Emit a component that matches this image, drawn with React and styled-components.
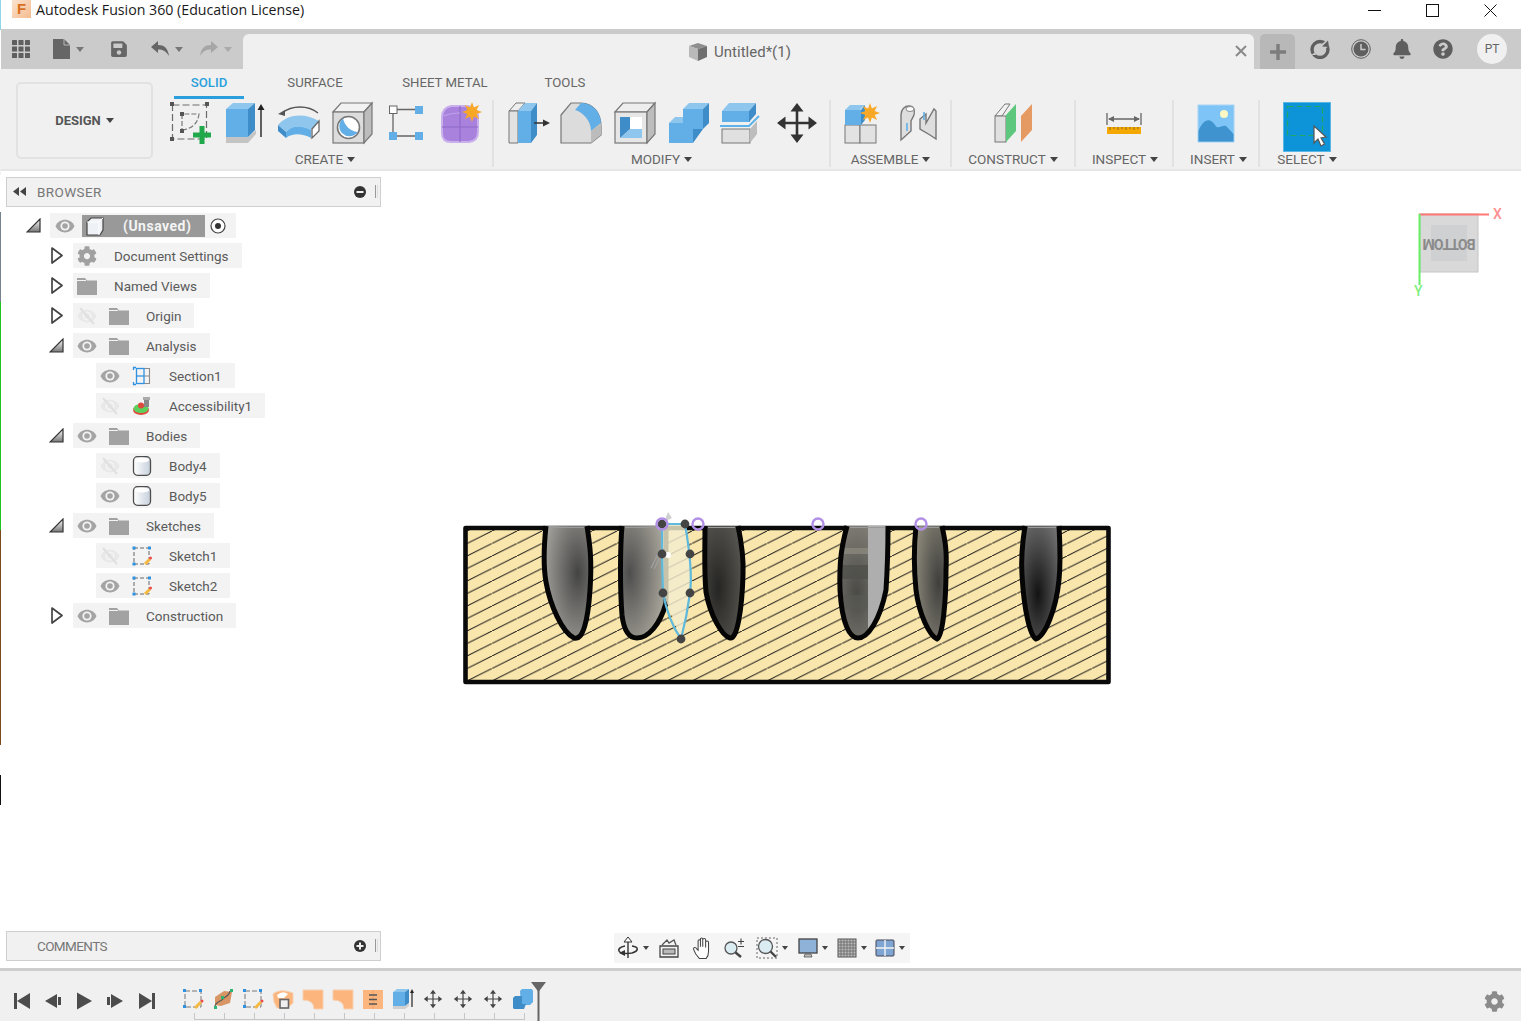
import React from 'react';
import styled, { createGlobalStyle } from 'styled-components';
import { FaCog, FaBell, FaQuestionCircle, FaSave } from 'react-icons/fa';

const GlobalStyle = createGlobalStyle`
  html, body { margin: 0; padding: 0; background: #fff; }
  body { font-family: Roboto, "Liberation Sans", sans-serif; overflow: hidden; }
`;

const BLUE = '#62aee6';
const DARK_BLUE = '#3f8dc8';
const LIGHT_BLUE = '#8fc6ee';
const LINE = '#6b6b6b';
const PEACH = '#fdb57e';

const Frame = styled.div`
  position: relative;
  width: 1521px;
  height: 1021px;
  display: flex;
  flex-direction: column;
  background: #fff;
`;

const EdgeStrip = styled.div`
  position: absolute;
  left: 0;
  top: 0;
  width: 1px;
  height: 810px;
  z-index: 5;
  background: linear-gradient(to bottom,
    #8fd6e8 0 30px, #fff 30px 69px, #f0f0f0 69px 175px, #fff 175px 212px, #77838a 212px 302px,
    #1fc41f 302px 530px, #7a4a1a 530px 745px, #fff 745px 775px, #111 775px 805px, #fff 805px);
`;

const TitleBar = styled.div`
  height: 29px;
  display: flex;
  align-items: flex-start;
  padding-left: 12px;
  flex-shrink: 0;
`;

const AppLogo = styled.div`
  width: 19px;
  height: 18px;
  background: linear-gradient(135deg, #fbe3cf, #f4bb8e);
  color: #d9701f;
  font: bold 15px/18px "Liberation Sans", sans-serif;
  text-align: center;
`;

const TitleText = styled.div`
  margin-left: 5px;
  font: 14.2px/20px "Open Sans", sans-serif;
  color: #1a1a1a;
`;

const WindowButtons = styled.div`
  margin-left: auto;
  margin-right: 2px;
  display: flex;
`;

const WindowButton = styled.div`
  width: 58px;
  height: 20px;
  display: flex;
  align-items: center;
  justify-content: center;
`;

const TopBar = styled.div`
  height: 40px;
  flex-shrink: 0;
  background: #cbcbcb;
  display: flex;
  align-items: flex-end;
`;

const FileTools = styled.div`
  width: 243px;
  height: 40px;
  display: flex;
  align-items: center;
  padding-left: 12px;
  box-sizing: border-box;
`;

const FileTool = styled.div`
  display: flex;
  align-items: center;
  gap: 6px;
  margin-left: ${({ $ml }) => $ml || 0}px;
  color: ${({ $faded }) => ($faded ? '#a6a6a6' : '#666')};
  svg { display: block; }
`;

const Caret = styled.span`
  display: inline-block;
  width: 0;
  height: 0;
  border-left: ${({ $s }) => $s || 3}px solid transparent;
  border-right: ${({ $s }) => $s || 3}px solid transparent;
  border-top: ${({ $s }) => ($s ? $s + 1 : 4)}px solid ${({ $c }) => $c || '#444'};
`;

const DocTab = styled.div`
  width: 1011px;
  height: 35px;
  background: #f0f0f0;
  border-radius: 6px 6px 0 0;
  position: relative;
  display: flex;
  align-items: center;
  justify-content: center;
  gap: 6px;
  padding-right: 18px;
  box-sizing: border-box;
  font-size: 15px;
  color: #666;
`;

const TabClose = styled.div`
  position: absolute;
  right: 7px;
  top: 11px;
  line-height: 0;
`;

const PlusTab = styled.div`
  width: 35px;
  height: 35px;
  margin-left: 6px;
  background: #b8b8b8;
  border-radius: 5px 5px 0 0;
  display: flex;
  align-items: center;
  justify-content: center;
`;

const StatusIcons = styled.div`
  height: 40px;
  margin-left: 15px;
  display: flex;
  align-items: center;
  gap: 21px;
  color: #5f5f5f;
  svg { display: block; }
`;

const Avatar = styled.div`
  width: 30px;
  height: 30px;
  margin-left: 3px;
  border-radius: 50%;
  background: #f0f0f0;
  color: #666;
  font-size: 12px;
  line-height: 30px;
  text-align: center;
`;

const Ribbon = styled.div`
  height: 102px;
  flex-shrink: 0;
  background: #f0f0f0;
  border-bottom: 2px solid #e6e6e6;
  box-sizing: border-box;
  display: flex;
`;

const DesignButton = styled.div`
  width: 137px;
  height: 77px;
  margin: 13px 5px 0 16px;
  box-sizing: border-box;
  border: 2px solid #e2e2e2;
  border-radius: 5px;
  display: flex;
  align-items: center;
  justify-content: center;
  gap: 5px;
  font-size: 13px;
  font-weight: 700;
  color: #555;
`;

const RibbonBody = styled.div`
  display: flex;
  flex-direction: column;
`;

const Tabs = styled.div`
  height: 31px;
  display: flex;
  padding-left: 16px;
`;

const TabItem = styled.div`
  width: ${({ $w }) => $w}px;
  height: 30px;
  box-sizing: border-box;
  padding-top: 6px;
  text-align: center;
  font-size: 13.2px;
  line-height: 16px;
  color: ${({ $active }) => ($active ? '#2a9fdc' : '#666')};
  font-weight: ${({ $active }) => ($active ? 500 : 400)};
  border-bottom: 3px solid ${({ $active }) => ($active ? '#2a9fdc' : 'transparent')};
`;

const Groups = styled.div`
  display: flex;
  height: 67px;
`;

const Group = styled.div`
  width: ${({ $w }) => $w}px;
  box-sizing: border-box;
  border-right: ${({ $last }) => ($last ? 'none' : '2px solid #e2e2e2')};
  display: flex;
  flex-direction: column;
  align-items: center;
`;

const ToolRow = styled.div`
  height: 50px;
  margin-top: 1px;
  flex-shrink: 0;
  display: flex;
`;

const Tool = styled.div`
  width: ${({ $w }) => $w || 54}px;
  height: 44px;
  display: flex;
  align-items: center;
  justify-content: center;
  svg { display: block; }
`;

const SelectTool = styled.div`
  width: 48px;
  height: 50px;
  margin-top: 1px;
  background: #0d94d8;
  border: 1px solid #5ab6e6;
  box-sizing: border-box;
  svg { display: block; }
`;

const GroupLabel = styled.div`
  display: flex;
  align-items: center;
  gap: 4px;
  font-size: 13.5px;
  line-height: 16px;
  color: #666;
  padding-left: ${({ $pl }) => $pl || 0}px;
`;

const Main = styled.div`
  flex: 1;
  display: flex;
  min-height: 0;
`;

const SideColumn = styled.div`
  width: 375px;
  margin-left: 6px;
  padding: 6px 0 7px;
  display: flex;
  flex-direction: column;
`;

const PanelHeader = styled.div`
  height: 30px;
  flex-shrink: 0;
  box-sizing: border-box;
  background: #f1f1f1;
  border: 1px solid #cfcfcf;
  display: flex;
  align-items: center;
  padding: 0 2px 1px 6px;
  font-size: 13.5px;
  color: #777;
  margin-top: ${({ $bottom }) => ($bottom ? 'auto' : 0)};
`;

const PanelTitle = styled.span`
  margin-left: ${({ $ml }) => $ml}px;
  letter-spacing: ${({ $ls }) => $ls}px;
`;

const PanelTools = styled.div`
  margin-left: auto;
  display: flex;
  align-items: center;
  gap: 9px;
  svg { display: block; }
`;

const Grip = styled.span`
  width: 1px;
  height: 13px;
  border-left: 1px solid #999;
  border-right: 1px solid #ddd;
`;

const Tree = styled.div`
  margin-top: 6px;
  padding-left: 20px;
  display: flex;
  flex-direction: column;
  gap: 5px;
`;

const TreeRow = styled.div`
  display: flex;
  align-items: center;
  height: 25px;
  margin-left: ${({ $level }) => $level * 23}px;
`;

const Toggle = styled.div`
  width: 24px;
  flex-shrink: 0;
  svg { display: block; }
`;

const RowBox = styled.div`
  height: 25px;
  display: flex;
  align-items: center;
  background: #f3f3f3;
  padding: 0 13px 0 4px;
  font-size: 13.5px;
  color: #5a5a5a;
  svg { display: block; }
`;

const RootBox = styled(RowBox)`
  padding: 0 9px 0 5px;
`;

const Slot = styled.div`
  width: 20px;
  height: 20px;
  flex-shrink: 0;
  display: flex;
  align-items: center;
  justify-content: center;
  margin-right: ${({ $mr }) => $mr}px;
  color: #a0a0a0;
`;

const RootLabel = styled.div`
  width: 123px;
  height: 22px;
  margin-left: 7px;
  margin-right: 4px;
  background: #999;
  color: #f4f4f4;
  font-size: 14px;
  font-weight: 700;
  letter-spacing: 0.5px;
  display: flex;
  align-items: center;
  padding-left: 3px;
  box-sizing: border-box;
  gap: 18px;
`;

const Viewport = styled.div`
  flex: 1;
  position: relative;
`;

const Drawing = styled.svg`
  position: absolute;
  left: 74px;
  top: 334px;
`;

const ViewCube = styled.svg`
  position: absolute;
  left: 1029px;
  top: 34px;
`;

const NavBar = styled.div`
  position: absolute;
  left: 233px;
  top: 762px;
  width: 296px;
  height: 30px;
  background: #f5f5f5;
  display: flex;
  align-items: center;
`;

const NavItem = styled.div`
  display: flex;
  align-items: center;
  gap: 4px;
  margin-left: ${({ $ml }) => $ml}px;
  svg { display: block; }
`;

const Timeline = styled.div`
  height: 53px;
  flex-shrink: 0;
  box-sizing: border-box;
  border-top: 3px solid #cdcdcd;
  background: #f0f0f0;
  display: flex;
  align-items: flex-start;
`;

const Playback = styled.div`
  display: flex;
  gap: 13px;
  margin: 21px 0 0 13px;
  svg { display: block; }
`;

const Track = styled.div`
  position: relative;
  height: 50px;
  margin-left: 27px;
  display: flex;
  align-items: flex-start;
  gap: 8px;
  padding-top: 17px;
  box-sizing: border-box;
  svg { display: block; }
`;

const Ruler = styled.div`
  position: absolute;
  left: 12px;
  top: 42px;
  width: 331px;
  height: 7px;
  box-sizing: border-box;
  border-bottom: 1px solid #c6c6c6;
  background: repeating-linear-gradient(to right, #c6c6c6 0 1px, transparent 1px 30px);
`;

const Marker = styled.svg`
  position: absolute;
  left: 349px;
  top: 11px;
`;

const TimelineGear = styled.div`
  margin: 20px 16px 0 auto;
  color: #8b8b8b;
  line-height: 0;
`;

const Cell = ({ children, w = 48, h = 44 }) => (
  <svg width={w} height={h} viewBox={`0 0 ${w} ${h}`}>{children}</svg>
);

const Star = ({ cx, cy, r = 8, fill = '#f9a825' }) => {
  const pts = [];
  for (let i = 0; i < 16; i++) {
    const a = (i * Math.PI) / 8;
    const rr = i % 2 ? r * 0.5 : r;
    pts.push(`${(cx + rr * Math.cos(a)).toFixed(1)},${(cy + rr * Math.sin(a)).toFixed(1)}`);
  }
  return <polygon points={pts.join(' ')} fill={fill} />;
};

const SketchNewIcon = () => (
  <Cell>
    <rect x="6.5" y="4" width="34" height="34" fill="none" stroke={LINE} strokeWidth="1.2" strokeDasharray="7 3" />
    {[[6, 3], [41, 3], [6, 38]].map(([x, y]) => <rect key={x + '' + y} x={x - 2} y={y - 2} width="4" height="4" fill="#555" />)}
    <path d="M16 13V29M16 29C26 28 32 22 33 13H16" fill="none" stroke="#777" strokeWidth="1.2" strokeDasharray="5 2" />
    <rect x="14" y="11" width="4" height="4" fill="#555" />
    <rect x="14" y="28" width="4" height="4" fill="#555" />
    <path d="M33.5 25h5v6.5H45v5h-6.5V43h-5v-6.5H27v-5h6.5z" fill="#21a84a" />
  </Cell>
);

const ExtrudeIcon = () => (
  <Cell>
    <polygon points="6,36 28,36 36,29 36,33 28,42 6,42" fill="#c4c4c4" />
    <polygon points="6,8 13,2 35,2 28,8" fill={LIGHT_BLUE} />
    <rect x="6" y="8" width="22" height="28" fill={BLUE} />
    <polygon points="28,8 35,2 35,29 28,36" fill={DARK_BLUE} />
    <path d="M41 36V6" stroke="#222" strokeWidth="1.4" />
    <path d="M41 3l-3.5 6h7z" fill="#222" />
  </Cell>
);

const RevolveIcon = () => (
  <Cell>
    <path d="M8 12C18 4 34 4 44 12" fill="none" stroke="#555" strokeWidth="1.3" />
    <path d="M4 13l7-4v6z" fill="#555" />
    <path d="M4 24C14 12 32 12 45 20L37 29C28 24 18 24 12 31z" fill={LIGHT_BLUE} />
    <path d="M4 24L12 31V37L4 30z" fill={DARK_BLUE} />
    <path d="M12 31C18 24 28 24 37 29V37C28 32 18 32 12 37z" fill={BLUE} />
    <path d="M38 28L45 20V30L38 37z" fill="#fff" stroke="#666" strokeWidth="1.3" />
  </Cell>
);

const HoleIcon = () => (
  <Cell>
    <polygon points="5,11 13,2 44,2 36,11" fill="#f2f2f2" stroke="#777" strokeWidth="1.2" />
    <rect x="5" y="11" width="31" height="31" fill="#dcdcdc" stroke="#777" strokeWidth="1.2" />
    <polygon points="36,11 44,2 44,33 36,42" fill="#bdbdbd" stroke="#777" strokeWidth="1.2" />
    <circle cx="20.5" cy="26.5" r="11" fill="#fff" stroke="#777" strokeWidth="1.6" />
    <path d="M15 17.5A10 10 0 1 0 29.5 31C22 30 17 25 15 17.5z" fill={BLUE} />
  </Cell>
);

const PatternIcon = () => (
  <Cell>
    <path d="M15 8.5H33M11 12V31M15 35H33" stroke="#666" strokeWidth="1.3" />
    <rect x="7.5" y="5" width="7.5" height="7.5" fill="#fff" stroke="#666" />
    <rect x="33" y="5" width="8" height="8" fill={BLUE} />
    <rect x="7" y="31" width="8" height="8" fill={BLUE} />
    <rect x="33" y="31" width="8" height="8" fill={BLUE} />
  </Cell>
);

const FormIcon = () => (
  <Cell>
    <path d="M6 16Q6 7 15 5H30Q41 5 42 14V31Q42 40 33 41H15Q6 41 6 32z" fill="#a882dd" stroke="#c9b0ec" strokeWidth="2" />
    <path d="M6 26H42M24 5V41" fill="none" stroke="#8e69c8" strokeWidth="1.1" />
    <path d="M8 15Q14 12 24 12" fill="none" stroke="#bfa3e8" strokeWidth="1.2" />
    <Star cx={36} cy={11} r={10} />
  </Cell>
);

const PressPullIcon = () => (
  <Cell>
    <polygon points="6,10 13,2 22,2 15,10" fill="#eee" stroke="#777" />
    <polygon points="6,10 15,10 15,42 6,42" fill="#e2e2e2" stroke="#777" />
    <polygon points="15,10 22,2 34,2 28,10" fill={LIGHT_BLUE} />
    <rect x="15" y="10" width="13" height="32" fill={BLUE} />
    <polygon points="28,10 34,2 34,34 28,42" fill={DARK_BLUE} />
    <path d="M31 22H41" stroke="#333" strokeWidth="1.5" />
    <path d="M47 22l-7-3.5v7z" fill="#333" />
  </Cell>
);

const FilletIcon = () => (
  <Cell>
    <path d="M4 14L14 2H24C36 2 44 12 44 26V34L34 42H4z" fill="#dcdcdc" stroke="#777" strokeWidth="1.2" />
    <path d="M24 2C36 2 44 12 44 22L34 30C34 20 26 11 18 9z" fill={BLUE} />
    <path d="M34 30V42L44 34V22z" fill="#bcbcbc" />
  </Cell>
);

const ShellIcon = () => (
  <Cell>
    <polygon points="4,11 12,2 44,2 36,11" fill="#eee" stroke="#777" strokeWidth="1.2" />
    <rect x="4" y="11" width="32" height="31" fill="#e6e6e6" stroke="#777" strokeWidth="1.2" />
    <polygon points="36,11 44,2 44,33 36,42" fill="#bdbdbd" stroke="#777" strokeWidth="1.2" />
    <rect x="9" y="16" width="22" height="21" fill="#fff" />
    <polygon points="9,37 19,28 31,28 31,37" fill={LIGHT_BLUE} />
    <polygon points="9,16 19,16 19,28 9,37" fill={DARK_BLUE} />
  </Cell>
);

const CombineIcon = () => (
  <Cell>
    <polygon points="18,8 24,2 44,2 38,8" fill={LIGHT_BLUE} />
    <rect x="18" y="8" width="20" height="20" fill={BLUE} />
    <polygon points="38,8 44,2 44,22 38,28" fill={DARK_BLUE} />
    <polygon points="4,22 10,16 18,16 18,22" fill={LIGHT_BLUE} />
    <rect x="4" y="22" width="24" height="20" fill={BLUE} />
    <polygon points="28,28 38,28 28,42" fill={DARK_BLUE} />
  </Cell>
);

const SplitIcon = () => (
  <Cell>
    <polygon points="3,10 10,2 37,2 30,10" fill={LIGHT_BLUE} />
    <rect x="3" y="10" width="28" height="11" fill={BLUE} />
    <polygon points="30,10 37,2 37,13 30,21" fill={DARK_BLUE} />
    <path d="M1 25H30L40 15" fill="none" stroke="#5eb2ea" strokeWidth="2" />
    <rect x="3" y="28" width="28" height="14" fill="#e0e0e0" stroke="#777" />
    <polygon points="31,28 38,20 38,33 31,42" fill="#bdbdbd" />
  </Cell>
);

const MoveIcon = ({ w = 48, h = 44, color = '#333' }) => (
  <svg width={w} height={h} viewBox="0 0 48 44">
    <path d="M24 8V36M10 22H38" stroke={color} strokeWidth="2.6" />
    <path d="M24 2l-6.5 8.5h13zM24 42l-6.5-8.5h13zM4 22l8.5-6.5v13zM44 22l-8.5-6.5v13z" fill={color} />
  </svg>
);

const NewComponentIcon = () => (
  <Cell>
    <rect x="5" y="24" width="15" height="18" fill="#e2e2e2" stroke="#777" />
    <rect x="20" y="24" width="16" height="18" fill="#e2e2e2" stroke="#777" />
    <polygon points="5,9 10,4 25,4 20,9" fill={LIGHT_BLUE} />
    <rect x="5" y="9" width="16" height="15" fill={BLUE} />
    <polygon points="21,9 25,4 25,19 21,24" fill={DARK_BLUE} />
    <Star cx={30} cy={12} r={10} />
  </Cell>
);

const JointIcon = () => (
  <Cell>
    <path d="M7 36V14C7 8 11 5 15 5C20 5 21 9 20 14L17 20V30L7 39z" fill="#dedede" stroke="#777" strokeWidth="1.4" />
    <ellipse cx="16" cy="8" rx="4" ry="2.5" fill="#fff" stroke="#888" />
    <path d="M26 18L32 13V22L40 8L42 10V38L36 34L26 28z" fill="#dedede" stroke="#777" strokeWidth="1.4" />
    <path d="M13 22V30M30 11V19" stroke={BLUE} strokeWidth="1.6" />
  </Cell>
);

const ConstructIcon = () => (
  <Cell>
    <polygon points="6,15 16,3 21,3 13,15" fill="#f2f2f2" stroke="#777" />
    <rect x="6" y="15" width="11" height="26" fill="#e0e0e0" stroke="#777" />
    <polygon points="17,14 27,3 27,30 17,41" fill="#5dc77e" />
    <polygon points="32,15 43,3 43,29 32,41" fill="#e59a63" />
  </Cell>
);

const RulerIcon = () => (
  <Cell>
    <path d="M7 12V24M41 12V24M9 18H39" fill="none" stroke="#666" strokeWidth="1.3" />
    <path d="M8 18l6-3v6zM40 18l-6-3v6z" fill="#666" />
    <rect x="7" y="26" width="34" height="7" fill="#f5a800" />
    <path d="M10 26v3M14 26v2M18 26v3M22 26v2M26 26v3M30 26v2M34 26v3M38 26v2" stroke="#8a6a20" strokeWidth="1" />
  </Cell>
);

const ImageIcon = () => (
  <Cell>
    <rect x="6" y="4" width="36" height="37" fill="#7fc4f6" stroke="#a8d4f3" />
    <circle cx="32" cy="13" r="4" fill="#fdf7c4" />
    <path d="M6.5 30C11 18 18 16 23 24C26 30 31 22 35 26L41.5 33V40.5H6.5z" fill="#3f93cf" />
  </Cell>
);

const SelectIcon = () => (
  <svg width="46" height="48" viewBox="0 0 46 48">
    <rect x="3.5" y="3.5" width="35" height="29" fill="none" stroke="#22a866" strokeWidth="1.2" strokeDasharray="6 3" />
    <path d="M30 23V40L34 36L37 43L40.5 41L37 35L42 34z" fill="#fff" stroke="#555" strokeWidth="1.2" />
  </svg>
);

const Eye = ({ hidden }) => (
  <svg width="20" height="20" viewBox="0 0 20 20">
    <path d="M0.5 10C4 1.5 16 1.5 19.5 10C16 18.5 4 18.5 0.5 10z" fill={hidden ? '#e8e8e8' : '#a4a4a4'} />
    <circle cx="10" cy="10" r="4.6" fill="#f3f3f3" />
    <circle cx="10" cy="10" r="2.8" fill={hidden ? '#e8e8e8' : '#a4a4a4'} />
    {hidden && <path d="M3 2L17 18" stroke="#e0e0e0" strokeWidth="2" />}
  </svg>
);

const Folder = () => (
  <svg width="20" height="20" viewBox="0 0 20 20">
    <path d="M0 2H8L10 4.5H20V19H0z" fill="#a2a2a2" />
    <path d="M0 4.5H9" stroke="#f3f3f3" strokeWidth="1" />
  </svg>
);

const SectionIcon = () => (
  <svg width="20" height="20" viewBox="0 0 20 20">
    <path d="M4 1.5H1.5V4M1.5 16V18.5H4" fill="none" stroke="#2f92e0" strokeWidth="1.3" />
    <path d="M12 2.5H17.5V17.5H12M12 10H17.5" fill="none" stroke="#8c8c8c" strokeWidth="1.1" />
    <rect x="4.5" y="2.5" width="7.5" height="15" fill="none" stroke="#2f92e0" strokeWidth="1.3" />
    <path d="M4.5 10H12" stroke="#2f92e0" strokeWidth="1.3" />
  </svg>
);

const AccessIcon = () => (
  <svg width="20" height="20" viewBox="0 0 20 20">
    <ellipse cx="9" cy="14" rx="8" ry="5" fill="#e0483c" />
    <ellipse cx="9" cy="12.5" rx="7.5" ry="4.5" fill="#5ccf5c" />
    <rect x="12" y="3" width="5" height="8" fill="#888" />
    <rect x="11" y="1" width="7" height="3" fill="#aaa" />
    <circle cx="9" cy="9.5" r="3" fill="#e0483c" />
  </svg>
);

const BodyIcon = () => (
  <svg width="20" height="20" viewBox="0 0 20 20">
    <defs>
      <linearGradient id="bodyFill" x1="0" y1="0" x2="1" y2="0">
        <stop offset="0" stopColor="#fff" />
        <stop offset="1" stopColor="#c5cfdb" />
      </linearGradient>
    </defs>
    <rect x="1.5" y="0.7" width="17" height="18.6" rx="4" fill="url(#bodyFill)" stroke="#4d4d4d" strokeWidth="1.3" />
    <ellipse cx="10" cy="4" rx="7" ry="2.5" fill="#fff" />
  </svg>
);

const SketchIcon = () => (
  <svg width="20" height="20" viewBox="0 0 20 20">
    <rect x="2" y="2" width="15" height="16" fill="none" stroke="#666" strokeWidth="1" strokeDasharray="4 2" />
    <path d="M13 18L18 13" stroke="#f5b942" strokeWidth="3" />
    <circle cx="18.5" cy="12" r="1.5" fill="#ee4b4b" />
    <rect x="0.5" y="0.5" width="3" height="3" fill="#2f92e0" />
    <rect x="16" y="0.5" width="3" height="3" fill="#2f92e0" />
    <rect x="0.5" y="16.5" width="3" height="3" fill="#2f92e0" />
  </svg>
);

const CubeOutline = () => (
  <svg width="20" height="20" viewBox="0 0 20 20">
    <path d="M2 6L6 2H18V14L15 19H2z" fill="#eef1f5" stroke="#444" strokeWidth="1.2" />
    <path d="M2 6H14V19M14 6L18 2" fill="none" stroke="#fff" strokeWidth="1" />
  </svg>
);

const TreeOpen = () => (
  <svg width="15" height="15" viewBox="0 0 15 15">
    <defs>
      <linearGradient id="openFill" x1="0" y1="0" x2="0" y2="1">
        <stop offset="0" stopColor="#fff" />
        <stop offset="1" stopColor="#777" />
      </linearGradient>
    </defs>
    <polygon points="14,1 14,14 1,14" fill="url(#openFill)" stroke="#333" strokeWidth="1.2" />
  </svg>
);

const TreeClosed = () => (
  <svg width="15" height="17" viewBox="0 0 15 17">
    <polygon points="3,1 13,8.5 3,16" fill="#fff" stroke="#444" strokeWidth="1.7" strokeLinejoin="round" />
  </svg>
);

const Radio = () => (
  <svg width="18" height="18" viewBox="0 0 18 18">
    <circle cx="9" cy="9" r="7" fill="#fff" stroke="#444" strokeWidth="1.2" />
    <circle cx="9" cy="9" r="3" fill="#333" />
  </svg>
);

const CollapseArrows = () => (
  <svg width="13" height="9" viewBox="0 0 13 9">
    <path d="M0 4.5L6 0V9zM7 4.5L13 0V9z" fill="#444" />
  </svg>
);

const MinusDot = () => (
  <svg width="12" height="12" viewBox="0 0 12 12">
    <circle cx="6" cy="6" r="6" fill="#333" />
    <rect x="2.5" y="5" width="7" height="2" fill="#f1f1f1" />
  </svg>
);

const PlusDot = () => (
  <svg width="12" height="12" viewBox="0 0 12 12">
    <circle cx="6" cy="6" r="6" fill="#333" />
    <path d="M2.5 6H9.5M6 2.5V9.5" stroke="#f1f1f1" strokeWidth="2" />
  </svg>
);

const AppGrid = () => (
  <svg width="18" height="18" viewBox="0 0 18 18">
    {[0, 6.5, 13].flatMap((y) => [0, 6.5, 13].map((x) => <rect key={`${x}-${y}`} x={x} y={y} width="5" height="5" rx="0.6" fill="#5f5f5f" />))}
  </svg>
);

const FileIcon = () => (
  <svg width="17" height="20" viewBox="0 0 17 20">
    <path d="M0 0H11L17 6V20H0z" fill="#666" />
    <path d="M11 0V6H17" fill="none" stroke="#cbcbcb" strokeWidth="0.8" />
  </svg>
);

const UndoArrow = ({ flip }) => (
  <svg width="18" height="16" viewBox="0 0 18 16">
    <g transform={flip ? 'translate(18 0) scale(-1 1)' : undefined}>
      <path d="M0 6L7 0V4C13 4 17 7 18 15C15 10 12 8.5 7 8.5V12z" fill="currentColor" />
    </g>
  </svg>
);

const CloudSync = () => (
  <svg width="20" height="20" viewBox="0 0 20 20">
    <circle cx="10" cy="10.5" r="8" fill="none" stroke="#5f5f5f" strokeWidth="3.4" />
    <path d="M9 7L17 1L20 2L19 7L12 12z" fill="#cbcbcb" />
    <path d="M12 7.5L18 1.5L19 8z" fill="#5f5f5f" />
    <path d="M1 16L5 13.5L6 16z" fill="#cbcbcb" />
  </svg>
);

const Clock = () => (
  <svg width="20" height="20" viewBox="0 0 20 20">
    <circle cx="10" cy="10" r="9.3" fill="none" stroke="#5f5f5f" strokeWidth="1" />
    <circle cx="10" cy="10" r="7.5" fill="#5f5f5f" />
    <path d="M10 5V10.5H14.5" fill="none" stroke="#cbcbcb" strokeWidth="1.5" />
  </svg>
);

const PlaybackIcon = ({ kind }) => {
  const shapes = {
    first: 'M1 1H4V17H1zM17 1V17L4 9z',
    prev: 'M14 5H17V13H14zM13 2V16L1 9z',
    play: 'M2 0.5L17 9L2 17.5z',
    next: 'M1 5H4V13H1zM5 2L17 9L5 16z',
    last: 'M15 1H18V17H15zM2 1L15 9L2 17z',
  };
  return (
    <svg width="18" height="18" viewBox="0 0 18 18">
      <path d={shapes[kind]} fill="#4c4c4c" />
    </svg>
  );
};

const MiniSketch = () => (
  <svg width="22" height="22" viewBox="0 0 22 22">
    <rect x="3" y="3" width="16" height="16" fill="none" stroke="#777" strokeWidth="1" strokeDasharray="5 2" />
    <path d="M13 20L19 14" stroke="#f5b942" strokeWidth="3" />
    <circle cx="20" cy="13" r="1.5" fill="#ee4b4b" />
    {[[1, 1], [17, 1], [1, 17]].map(([x, y]) => <rect key={`${x}${y}`} x={x} y={y} width="3" height="3" fill="#2f92e0" />)}
  </svg>
);

const MiniPatch = () => (
  <svg width="22" height="22" viewBox="0 0 22 22">
    <path d="M3 9L12 3L20 4L18 15L9 18L3 17z" fill="#d89566" />
    <path d="M3 19C3 13 9 14 11 11S17 9 18 3" fill="none" stroke="#555" strokeWidth="1.2" />
    <rect x="9" y="8" width="3" height="3" fill="#2bb673" />
    <rect x="2" y="18" width="3" height="3" fill="#2bb673" />
    <rect x="18" y="1" width="3" height="3" fill="#2bb673" />
  </svg>
);

const MiniLoft = () => (
  <svg width="22" height="22" viewBox="0 0 22 22">
    <path d="M1 6Q8 0 21 5V15L15 20H5Q1 14 1 6z" fill={PEACH} stroke="#f6cfae" />
    <path d="M5 7Q11 2 16 6L12 10H6z" fill="#fff" />
    <rect x="8" y="11.5" width="8.5" height="8.5" fill="#f0f0f0" stroke="#666" strokeWidth="1.6" />
  </svg>
);

const MiniFillet = () => (
  <svg width="22" height="22" viewBox="0 0 22 22">
    <path d="M1 2H21V21H12Q12 12 1 12z" fill={PEACH} stroke="#f6cfae" />
  </svg>
);

const MiniChamfer = () => (
  <svg width="22" height="22" viewBox="0 0 22 22">
    <rect x="1" y="2" width="20" height="19" fill={PEACH} />
    <path d="M11 2V21" stroke="#f0a46a" />
    <path d="M7 7H15M7 11.5H15M7 16H15" stroke="#555" strokeWidth="1.4" />
  </svg>
);

const MiniExtrude = () => (
  <svg width="22" height="22" viewBox="0 0 22 22">
    <polygon points="1,4 5,1 17,1 13,4" fill={LIGHT_BLUE} />
    <rect x="1" y="4" width="12" height="14" fill={BLUE} />
    <polygon points="13,4 17,1 17,15 13,18" fill={DARK_BLUE} />
    <path d="M1 18H13L17 15V18L13 21H1z" fill="#cfcfcf" />
    <path d="M20 19V3" stroke="#222" strokeWidth="1.2" />
    <path d="M20 1l-2 4h4z" fill="#222" />
  </svg>
);

const MiniCombine = () => (
  <svg width="22" height="22" viewBox="0 0 22 22">
    <path d="M8 3L10 1H20L21 3V14L18 17H9z" fill={BLUE} />
    <path d="M1 10L3 8H10V16H14L12 21H2L1 20z" fill={DARK_BLUE} />
  </svg>
);

const OrbitIcon = () => (
  <svg width="22" height="24" viewBox="0 0 22 24">
    <path d="M11 2V22" stroke="#333" strokeWidth="1.4" />
    <path d="M11 1L7 6H15z" fill="#fff" stroke="#333" />
    <path d="M8 10C3 11 1 13 2 15C3 17 8 18 15 17C19 16 21 14 20 12C19.5 11 18 10.5 15 10" fill="none" stroke="#333" strokeWidth="1.6" />
    <path d="M2 17L8 14V20z" fill="#333" />
  </svg>
);

const LookAtIcon = () => (
  <svg width="22" height="22" viewBox="0 0 22 22">
    <path d="M2 9H20V20H2z" fill="#f2f2f2" stroke="#444" strokeWidth="1.3" />
    <rect x="5" y="12" width="12" height="5" fill="#bbb" stroke="#444" />
    <path d="M4 8L9 3L11 6L16 3L18 8" fill="none" stroke="#555" strokeWidth="1.3" />
  </svg>
);

const HandIcon = () => (
  <svg width="22" height="22" viewBox="1 0.5 15 19">
    <path d="M7 19C5 17 3 14 2 11C2 9 4 9 5 11L6 12V4C6 2.5 8 2.5 8 4V9V2.5C8 1 10 1 10 2.5V9V3C10 1.5 12.5 1.5 12.5 3V9.5V5C12.5 3.5 15 3.5 15 5V13C15 16 14 18 13 19z" fill="#fff" stroke="#444" strokeWidth="0.9" />
  </svg>
);

const ZoomIcon = () => (
  <svg width="22" height="22" viewBox="0 0 22 22">
    <circle cx="8" cy="11" r="6" fill="#dcecf3" stroke="#555" strokeWidth="1.3" />
    <path d="M12.5 15.5L18 20" stroke="#444" strokeWidth="2.4" />
    <path d="M15 4.5H21M18 1.5V7.5M15 9.5H21" stroke="#444" strokeWidth="1.1" />
  </svg>
);

const FitIcon = () => (
  <svg width="22" height="22" viewBox="0 0 22 22">
    <rect x="1" y="1" width="20" height="20" fill="none" stroke="#666" strokeDasharray="2 2" />
    <circle cx="9.5" cy="9.5" r="7" fill="#dcecf3" stroke="#555" strokeWidth="1.3" />
    <path d="M14.5 14.5L20 20" stroke="#444" strokeWidth="2.4" />
  </svg>
);

const DisplayIcon = () => (
  <svg width="20" height="22" viewBox="0 0 20 22">
    <rect x="1" y="2" width="18" height="14" fill="#8fb2d9" stroke="#444" strokeWidth="1.3" />
    <path d="M7 17H13L14 20H6z" fill="#bbb" stroke="#555" strokeWidth="0.8" />
  </svg>
);

const GridIcon = () => (
  <svg width="20" height="20" viewBox="0 0 20 20">
    <rect x="1" y="1" width="18" height="18" fill="#bbb" stroke="#555" />
    <path d="M4 1V19M7 1V19M10 1V19M13 1V19M16 1V19M1 4H19M1 7H19M1 10H19M1 13H19M1 16H19" stroke="#666" strokeWidth="0.8" />
  </svg>
);

const ViewsIcon = () => (
  <svg width="20" height="18" viewBox="0 0 20 18">
    <rect x="1" y="1" width="18" height="16" rx="1" fill="#7fa6d2" stroke="#445" />
    <path d="M10 1V17M1 9H19" stroke="#f5f5f5" strokeWidth="1.4" />
  </svg>
);

const WIN_STROKE = '#111';

const Hatched = () => (
  <pattern id="hatch" patternUnits="userSpaceOnUse" width="25" height="12.5" x="467" y="531">
    <rect width="25" height="12.5" fill="#f9e6ad" />
    <path d="M-1 13L26 -0.5" stroke="#111" strokeWidth="1" />
  </pattern>
);

const teeth = [
  { id: 't1', d: 'M546 526C544 545 543 565 546 582C550 605 562 632 574 638C583 641 588 620 590 590C592 560 590 545 587 526', stops: [['0', '#444'], ['1', '#a9a7a1']], cx: 0.72, cy: 0.42 },
  { id: 't2', d: 'M622 526C620 550 620 590 622 615C624 632 630 638 637 638C648 638 660 625 666 603L666 526', stops: [['0', '#4e4e4e'], ['1', '#a9a69b']], cx: 0.2, cy: 0.42 },
  { id: 't3', d: 'M705 526C705 550 704 570 706 592C710 615 722 636 730 638C737 640 742 610 743 575C744 555 741 540 738 526', stops: [['0', '#252523'], ['1', '#5f5d57']], cx: 0.35, cy: 0.55 },
  { id: 't4', d: 'M847 526C842 545 839 560 840 590C842 625 850 638 858 638C868 638 880 620 886 590C888 560 888 545 888 526', stops: [['0', '#4a4a46'], ['1', '#8d8a80']], cx: 0.35, cy: 0.6 },
  { id: 't5', d: 'M916 526C914 545 914 570 916 590C919 615 930 636 937 639C943 636 946 600 946 570C947 550 945 540 942 526', stops: [['0', '#3f3f3d'], ['1', '#8f8b7c']], cx: 0.75, cy: 0.5 },
  { id: 't6', d: 'M1025 526C1022 545 1021 560 1022 575C1024 610 1030 636 1036 639C1045 636 1056 610 1059 580C1061 560 1060 545 1059 526', stops: [['0', '#131313'], ['1', '#7a7a7a']], cx: 0.42, cy: 0.6 },
];

const sketchPts = [[662, 524], [685, 524], [690, 554], [690, 593], [681, 639], [663, 593], [662, 554]];
const purpleRings = [[662, 524], [698, 524], [818, 524], [921, 524]];

const tree = [
  { level: 1, toggle: 'closed', icon: <FaCog size={20} />, label: 'Document Settings' },
  { level: 1, toggle: 'closed', icon: <Folder />, label: 'Named Views' },
  { level: 1, toggle: 'closed', eye: 'hidden', icon: <Folder />, label: 'Origin' },
  { level: 1, toggle: 'open', eye: 'shown', icon: <Folder />, label: 'Analysis' },
  { level: 2, eye: 'shown', icon: <SectionIcon />, label: 'Section1' },
  { level: 2, eye: 'hidden', icon: <AccessIcon />, label: 'Accessibility1' },
  { level: 1, toggle: 'open', eye: 'shown', icon: <Folder />, label: 'Bodies' },
  { level: 2, eye: 'hidden', icon: <BodyIcon />, label: 'Body4' },
  { level: 2, eye: 'shown', icon: <BodyIcon />, label: 'Body5' },
  { level: 1, toggle: 'open', eye: 'shown', icon: <Folder />, label: 'Sketches' },
  { level: 2, eye: 'hidden', icon: <SketchIcon />, label: 'Sketch1' },
  { level: 2, eye: 'shown', icon: <SketchIcon />, label: 'Sketch2' },
  { level: 1, toggle: 'closed', eye: 'shown', icon: <Folder />, label: 'Construction' },
];

const ribbonGroups = [
  { label: 'CREATE', w: 336, tools: [<SketchNewIcon />, <ExtrudeIcon />, <RevolveIcon />, <HoleIcon />, <PatternIcon />, <FormIcon />] },
  { label: 'MODIFY', w: 337, tools: [<PressPullIcon />, <FilletIcon />, <ShellIcon />, <CombineIcon />, <SplitIcon />, <MoveIcon />] },
  { label: 'ASSEMBLE', w: 121, tools: [<NewComponentIcon />, <JointIcon />] },
  { label: 'CONSTRUCT', w: 124, tools: [<ConstructIcon />] },
  { label: 'INSPECT', w: 98, pl: 2, tools: [<RulerIcon />] },
  { label: 'INSERT', w: 86, pl: 5, tools: [<ImageIcon />] },
];

const timelineIcons = [
  <MiniSketch />, <MiniPatch />, <MiniSketch />, <MiniLoft />, <MiniFillet />, <MiniFillet />, <MiniChamfer />,
  <MiniExtrude />, <MoveIcon w={22} h={22} color="#444" />, <MoveIcon w={22} h={22} color="#444" />, <MoveIcon w={22} h={22} color="#444" />, <MiniCombine />,
];

const TreeItem = ({ row }) => {
  const isLeaf = row.level === 2;
  return (
    <TreeRow $level={row.level}>
      {!isLeaf && (
        <Toggle>{row.toggle === 'open' ? <TreeOpen /> : <TreeClosed />}</Toggle>
      )}
      {isLeaf && <Toggle />}
      <RowBox>
        {row.eye && <Slot $mr={12}><Eye hidden={row.eye === 'hidden'} /></Slot>}
        <Slot $mr={17}>{row.icon}</Slot>
        {row.label}
      </RowBox>
    </TreeRow>
  );
};

export default function App() {
  return (
    <Frame>
      <GlobalStyle />
      <EdgeStrip />
      <TitleBar>
        <AppLogo>F</AppLogo>
        <TitleText>Autodesk Fusion 360 (Education License)</TitleText>
        <WindowButtons>
          <WindowButton>
            <svg width="13" height="13" viewBox="0 0 13 13"><path d="M0 6.5H13" stroke={WIN_STROKE} /></svg>
          </WindowButton>
          <WindowButton>
            <svg width="13" height="13" viewBox="0 0 13 13"><rect x="0.5" y="0.5" width="12" height="12" fill="none" stroke={WIN_STROKE} /></svg>
          </WindowButton>
          <WindowButton>
            <svg width="13" height="13" viewBox="0 0 13 13"><path d="M0.5 0.5L12.5 12.5M12.5 0.5L0.5 12.5" stroke={WIN_STROKE} /></svg>
          </WindowButton>
        </WindowButtons>
      </TitleBar>

      <TopBar>
        <FileTools>
          <FileTool><AppGrid /></FileTool>
          <FileTool $ml={23}><FileIcon /><Caret $s={4} $c="#777" /></FileTool>
          <FileTool $ml={26}><FaSave size={18} /></FileTool>
          <FileTool $ml={23}><UndoArrow /><Caret $s={4} $c="#777" /></FileTool>
          <FileTool $ml={17} $faded><UndoArrow flip /><Caret $s={4} $c="#aaa" /></FileTool>
        </FileTools>
        <DocTab>
          <svg width="20" height="20" viewBox="0 0 20 20">
            <polygon points="1,4 10,1 19,4 10,7" fill="#8e8e8e" />
            <polygon points="1,4 10,7 10,19 1,15" fill="#b9b9b9" />
            <polygon points="19,4 10,7 10,19 19,15" fill="#6f6f6f" />
          </svg>
          Untitled*(1)
          <TabClose>
            <svg width="12" height="12" viewBox="0 0 12 12"><path d="M1 1L11 11M11 1L1 11" stroke="#8a8a8a" strokeWidth="2" /></svg>
          </TabClose>
        </DocTab>
        <PlusTab>
          <svg width="18" height="18" viewBox="0 0 18 18"><path d="M9 1V17M1 9H17" stroke="#7c7c7c" strokeWidth="3.4" /></svg>
        </PlusTab>
        <StatusIcons>
          <CloudSync />
          <Clock />
          <FaBell size={20} />
          <FaQuestionCircle size={20} />
          <Avatar>PT</Avatar>
        </StatusIcons>
      </TopBar>

      <Ribbon>
        <DesignButton>DESIGN <Caret $s={4} /></DesignButton>
        <RibbonBody>
          <Tabs>
            <TabItem $w={70} $active>SOLID</TabItem>
            <TabItem $w={142}>SURFACE</TabItem>
            <TabItem $w={118}>SHEET METAL</TabItem>
            <TabItem $w={122}>TOOLS</TabItem>
          </Tabs>
          <Groups>
            {ribbonGroups.map((group) => (
              <Group key={group.label} $w={group.w}>
                <ToolRow>
                  {group.tools.map((tool, i) => <Tool key={i}>{tool}</Tool>)}
                </ToolRow>
                <GroupLabel $pl={group.pl}>{group.label} <Caret $s={4} /></GroupLabel>
              </Group>
            ))}
            <Group $w={94} $last>
              <ToolRow><SelectTool><SelectIcon /></SelectTool></ToolRow>
              <GroupLabel>SELECT <Caret $s={4} /></GroupLabel>
            </Group>
          </Groups>
        </RibbonBody>
      </Ribbon>

      <Main>
        <SideColumn>
          <PanelHeader>
            <CollapseArrows />
            <PanelTitle $ml={11} $ls={0.4}>BROWSER</PanelTitle>
            <PanelTools><MinusDot /><Grip /></PanelTools>
          </PanelHeader>
          <Tree>
            <TreeRow $level={0}>
              <Toggle><TreeOpen /></Toggle>
              <RootBox>
                <Slot $mr={0}><Eye /></Slot>
                <RootLabel><CubeOutline /> (Unsaved)</RootLabel>
                <Radio />
              </RootBox>
            </TreeRow>
            {tree.map((row) => <TreeItem key={row.label} row={row} />)}
          </Tree>
          <PanelHeader $bottom>
            <PanelTitle $ml={24} $ls={-0.6}>COMMENTS</PanelTitle>
            <PanelTools><PlusDot /><Grip /></PanelTools>
          </PanelHeader>
        </SideColumn>

        <Viewport>
          <ViewCube width="100" height="95" viewBox="1410 205 100 95">
            <rect x="1420" y="214" width="58" height="58" fill="#d9d9d9" stroke="#c4c4c4" />
            <rect x="1431" y="225" width="36" height="36" fill="#cfd0d2" />
            <text x="1449" y="243" textAnchor="middle" transform="rotate(180 1449 243)" dominantBaseline="middle" fontSize="14" fontWeight="700" fill="#8a8a8a" fontFamily="Roboto, sans-serif" textLength="53">BOTTOM</text>
            <path d="M1419 214.5H1489" stroke="#f77" strokeWidth="2" />
            <path d="M1419.5 214V285" stroke="#66ef66" strokeWidth="2" />
            <text x="1493" y="219" fontSize="14" fontWeight="500" fill="#ff9090" fontFamily="Roboto, sans-serif">X</text>
            <text x="1414" y="296" fontSize="14" fontWeight="500" fill="#80f080" fontFamily="Roboto, sans-serif">Y</text>
          </ViewCube>

          <Drawing width="665" height="190" viewBox="455 505 665 190">
            <defs>
              <Hatched />
              {teeth.map((t) => (
                <radialGradient key={t.id} id={t.id} cx={t.cx} cy={t.cy} r="0.8">
                  {t.stops.map(([o, c]) => <stop key={o} offset={o} stopColor={c} />)}
                </radialGradient>
              ))}
              <clipPath id="t4clip"><path d={teeth[3].d} /></clipPath>
            </defs>
            <rect x="465.5" y="528" width="643" height="154" fill="url(#hatch)" stroke="#0a0a0a" strokeWidth="4.6" strokeLinejoin="round" />
            {teeth.map((t) => (
              <path key={t.id} d={t.d} fill={`url(#${t.id})`} />
            ))}
            <g clipPath="url(#t4clip)">
              <rect x="868" y="526" width="21" height="115" fill="#aeaeae" />
              <rect x="838" y="565" width="30" height="14" fill="#4e4e4a" opacity="0.7" />
              <rect x="838" y="595" width="30" height="14" fill="#5a5a55" opacity="0.6" />
              <rect x="838" y="548" width="30" height="6" fill="#8f8c80" opacity="0.7" />
            </g>
            {teeth.map((t) => (
              <path key={t.id} d={t.d} fill="none" stroke="#050505" strokeWidth="5" />
            ))}
            {[[546, 587], [622, 666], [705, 738], [847, 888], [916, 942], [1025, 1059]].map(([a, b]) => (
              <path key={a} d={`M${a + 3} 527.5H${b - 3}`} stroke="#9a9a9a" strokeWidth="1" />
            ))}
            <polygon points={sketchPts.map((p) => p.join(',')).join(' ')} fill="#f3edd0" fillOpacity="0.82" />
            <path d="M662 524H685Q693 570 690 593T681 639Q668 620 663 593L662 554z" fill="none" stroke="#5fb9dc" strokeWidth="2.2" />
            <path d="M651 568L661 548M654 569L664 549" stroke="#a0a0a0" strokeWidth="1.2" />
            <path d="M664 522L668 512L672 518z" fill="#d0d0d0" />
            <circle cx="668" cy="555" r="3" fill="#fff" />
            {sketchPts.map(([x, y]) => <circle key={`${x}-${y}`} cx={x} cy={y} r="4.4" fill="#444" />)}
            {purpleRings.map(([x, y]) => (
              <circle key={x} cx={x} cy={y} r="5.5" fill="none" stroke="#b18fe6" strokeWidth="2.4" />
            ))}
          </Drawing>

          <NavBar>
            <NavItem $ml={3}><OrbitIcon /><Caret /></NavItem>
            <NavItem $ml={9}><LookAtIcon /></NavItem>
            <NavItem $ml={10}><HandIcon /></NavItem>
            <NavItem $ml={11}><ZoomIcon /></NavItem>
            <NavItem $ml={11}><FitIcon /><Caret /></NavItem>
            <NavItem $ml={10}><DisplayIcon /><Caret /></NavItem>
            <NavItem $ml={9}><GridIcon /><Caret /></NavItem>
            <NavItem $ml={8}><ViewsIcon /><Caret /></NavItem>
          </NavBar>
        </Viewport>
      </Main>

      <Timeline>
        <Playback>
          <PlaybackIcon kind="first" />
          <PlaybackIcon kind="prev" />
          <PlaybackIcon kind="play" />
          <PlaybackIcon kind="next" />
          <PlaybackIcon kind="last" />
        </Playback>
        <Track>
          {timelineIcons.map((icon, i) => <React.Fragment key={i}>{icon}</React.Fragment>)}
          <Ruler />
          <Marker width="15" height="39" viewBox="0 0 15 39">
            <polygon points="0,0 15,0 7.5,10" fill="#666" />
            <rect x="6.5" y="5" width="2" height="34" fill="#666" />
          </Marker>
        </Track>
        <TimelineGear><FaCog size={21} /></TimelineGear>
      </Timeline>
    </Frame>
  );
}
